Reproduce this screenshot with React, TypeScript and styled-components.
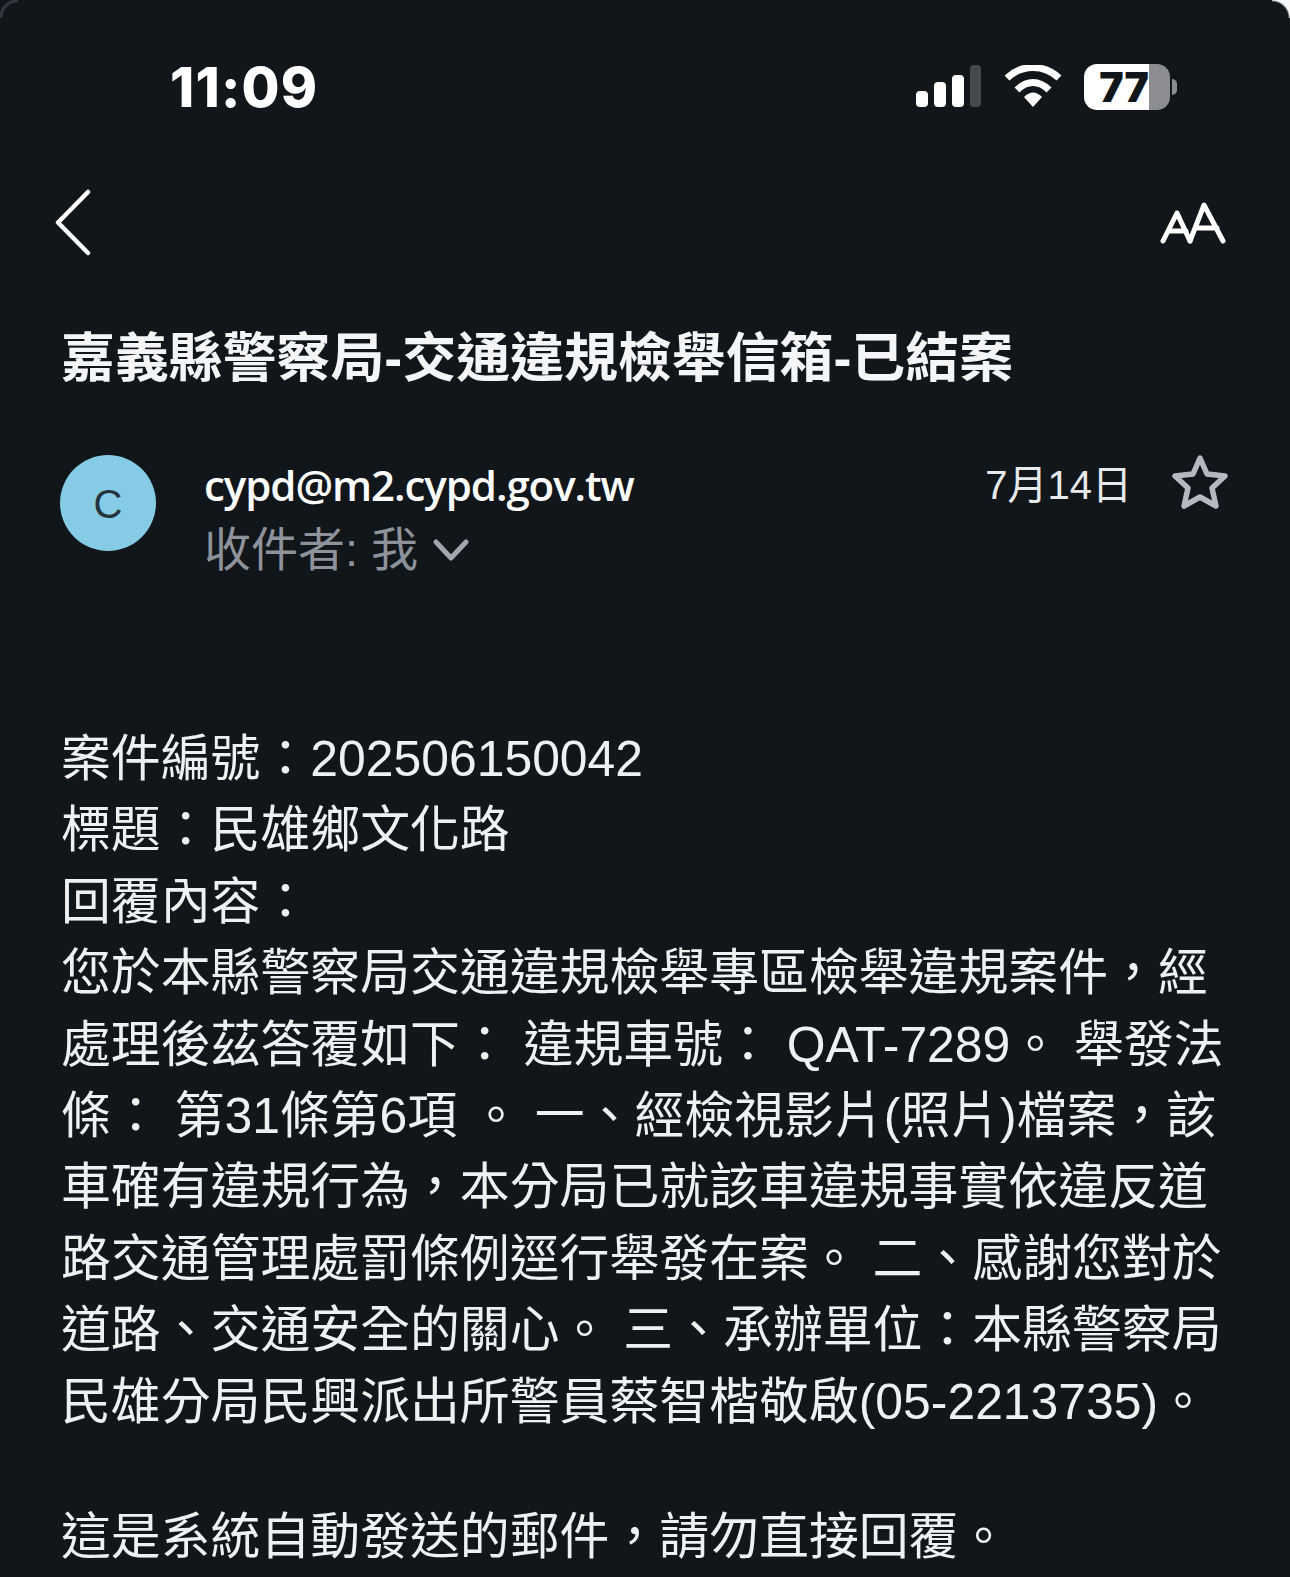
import styled, { createGlobalStyle } from "styled-components";

const GlobalStyle = createGlobalStyle`
  html, body {
    margin: 0;
    padding: 0;
    background: #11161b;
  }
`;

const Screen = styled.div`
  position: relative;
  width: 1290px;
  height: 1577px;
  overflow: hidden;
  background: #11161b;
  color: #fff;
  font-family: "Liberation Sans", "Noto Sans CJK TC", sans-serif;
`;

const Corner = styled.div<{ $side: "left" | "right" }>`
  position: absolute;
  top: 0;
  ${(p) => p.$side}: 0;
  width: 18px;
  height: 18px;
  background: ${(p) =>
    p.$side === "right"
      ? "radial-gradient(circle at 0 100%, transparent 16px, #f4f5f6 18px)"
      : "radial-gradient(circle at 100% 100%, transparent 15px, #3c4046 17px, #11161b 20px)"};
`;

const StatusBar = styled.div`
  display: flex;
  align-items: center;
  justify-content: space-between;
  height: 54px;
  padding: 60px 112px 0 170px;
`;

const Time = styled.div`
  font-family: Inter, sans-serif;
  font-size: 55px;
  font-weight: 800;
  line-height: 54px;
  letter-spacing: 1.2px;
`;

const StatusIcons = styled.div`
  display: flex;
  align-items: center;
  gap: 22px;
`;

const Battery = styled.div`
  position: relative;
  width: 86px;
  height: 46px;
  margin-right: 8px;
  padding-right: 6px;
  box-sizing: border-box;
  border-radius: 13px;
  background: linear-gradient(to right, #fff 65px, #8b8d90 65px);
  color: #11161b;
  font-family: Inter, sans-serif;
  font-size: 41px;
  font-weight: 900;
  line-height: 46px;
  text-align: center;

  &::after {
    content: "";
    position: absolute;
    top: 15px;
    right: -7px;
    width: 5px;
    height: 16px;
    border-radius: 0 6px 6px 0;
    background: #8b8d90;
  }
`;

const NavBar = styled.div`
  display: flex;
  align-items: center;
  justify-content: space-between;
  height: 70px;
  margin-top: 74px;
  padding: 0 64px 0 54px;
`;

const Subject = styled.h1`
  margin: 64px 0 0;
  padding-left: 61px;
  font-size: 53.9px;
  font-weight: 700;
  line-height: 72px;
  color: #f4f5f6;
`;

const SenderRow = styled.div`
  display: flex;
  align-items: flex-start;
  margin-top: 61px;
  padding: 0 62px 0 60px;
`;

const Avatar = styled.div`
  flex: none;
  display: flex;
  align-items: center;
  justify-content: center;
  width: 96px;
  height: 96px;
  padding-top: 3px;
  box-sizing: border-box;
  border-radius: 50%;
  background: #86cbe6;
  color: #24343d;
  font-size: 40px;
`;

const SenderInfo = styled.div`
  flex: 1;
  margin-left: 48px;
`;

const SenderAddress = styled.div`
  font-family: "Open Sans", sans-serif;
  font-size: 42px;
  font-weight: 600;
  line-height: 59px;
  letter-spacing: -1.05px;
`;

const Recipient = styled.div`
  display: flex;
  align-items: center;
  gap: 15px;
  margin-top: 2px;
  font-size: 47px;
  line-height: 67px;
  color: #8e939b;
`;

const DateBlock = styled.div`
  display: flex;
  align-items: center;
  gap: 40px;
  height: 54px;
  font-size: 40px;
  color: #e8e9eb;
`;

const Body = styled.div`
  margin-top: 141px;
  padding-left: 61px;
  font-size: 49.87px;
  line-height: 71.4px;
  color: #eef0f1;
`;

const Line = styled.div`
  white-space: pre;
`;

const Footer = styled(Line)`
  margin-top: 63.6px;
`;

const lines = [
  "案件編號：202506150042",
  "標題：民雄鄉文化路",
  "回覆內容：",
  "您於本縣警察局交通違規檢舉專區檢舉違規案件，經",
  "處理後茲答覆如下： 違規車號： QAT-7289。 舉發法",
  "條： 第31條第6項 。 一、經檢視影片(照片)檔案，該",
  "車確有違規行為，本分局已就該車違規事實依違反道",
  "路交通管理處罰條例逕行舉發在案。 二、感謝您對於",
  "道路、交通安全的關心。 三、承辦單位：本縣警察局",
  "民雄分局民興派出所警員蔡智楷敬啟(05-2213735)。",
];

export default function App() {
  return (
    <Screen>
      <GlobalStyle />
      <Corner $side="left" />
      <Corner $side="right" />
      <StatusBar>
        <Time>11:09</Time>
        <StatusIcons>
          <svg width="66" height="44" viewBox="0 0 66 44" fill="#fff">
            <rect x="0" y="26" width="12" height="16" rx="4" />
            <rect x="18" y="17" width="12" height="25" rx="4" />
            <rect x="36" y="10" width="12" height="32" rx="4" />
            <rect x="54" y="0" width="11" height="42" rx="4" fill="#47494d" />
          </svg>
          <svg width="58" height="44" viewBox="0 0 58 44" fill="none" stroke="#fff" strokeWidth="7">
            <path d="M3 13 C18 -1 40 -1 55 13" />
            <path d="M13 25 C23 15 35 15 45 25" />
            <path d="M20 32 L29 42 L38 32 C32 26 26 26 20 32Z" fill="#fff" stroke="none" />
          </svg>
          <Battery>77</Battery>
        </StatusIcons>
      </StatusBar>
      <NavBar>
        <svg width="40" height="70" viewBox="0 0 40 70" fill="none" stroke="#fff" strokeWidth="4.5" strokeLinecap="round" strokeLinejoin="round">
          <path d="M34 4 L4 34.5 L34 65" />
        </svg>
        <svg width="66" height="42" viewBox="0 0 66 42" fill="none" stroke="#fff" strokeWidth="5" strokeLinecap="round" strokeLinejoin="round">
          <path d="M3 39 L17 11 L30 39 M9 29 H26" />
          <path d="M30 39 L44 3 L63 39 M36 26 H57" />
        </svg>
      </NavBar>
      <Subject>嘉義縣警察局-交通違規檢舉信箱-已結案</Subject>
      <SenderRow>
        <Avatar>C</Avatar>
        <SenderInfo>
          <SenderAddress>cypd@m2.cypd.gov.tw</SenderAddress>
          <Recipient>
            收件者: 我
            <svg width="36" height="24" viewBox="0 0 36 24" fill="none" stroke="#a2a6ad" strokeWidth="5" strokeLinecap="round" strokeLinejoin="round">
              <path d="M3 4 L18 20 L33 4" />
            </svg>
          </Recipient>
        </SenderInfo>
        <DateBlock>
          7月14日
          <svg width="56" height="54" viewBox="0 0 56 54" fill="none" stroke="#b4b8c0" strokeWidth="5.5" strokeLinejoin="round">
            <path d="M28 3 L35 19 L53 21 L40 33 L44 51 L28 42 L12 51 L16 33 L3 21 L21 19 Z" />
          </svg>
        </DateBlock>
      </SenderRow>
      <Body>
        {lines.map((l) => (
          <Line key={l}>{l}</Line>
        ))}
        <Footer>這是系統自動發送的郵件，請勿直接回覆。</Footer>
      </Body>
    </Screen>
  );
}
